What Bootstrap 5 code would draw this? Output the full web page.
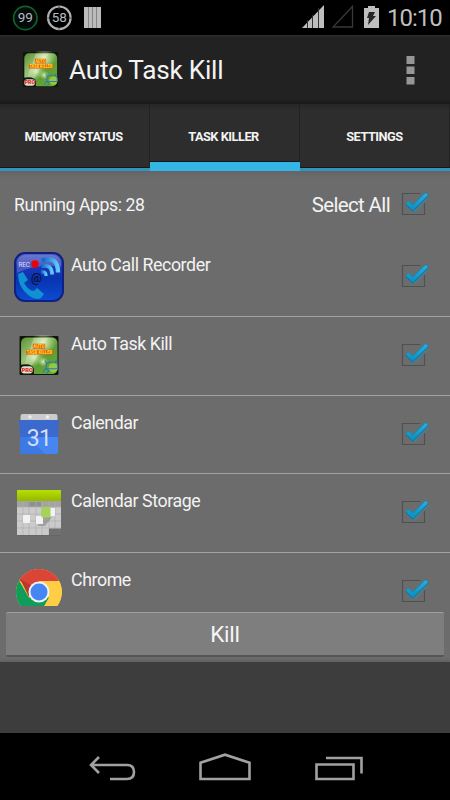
<!DOCTYPE html>
<html lang="en">
<head>
<meta charset="utf-8">
<meta name="viewport" content="width=device-width, initial-scale=1">
<title>Auto Task Kill</title>
<link href="https://cdn.jsdelivr.net/npm/bootstrap@5.3.0/dist/css/bootstrap.min.css" rel="stylesheet">
<style>
body{width:450px;height:800px;overflow:hidden;background:#3d3d3d;color:#f3f3f3;font-family:Roboto,"Liberation Sans",sans-serif;line-height:1}
svg{display:block;flex:none}
.status{height:35px;background:#000;padding:0 8px 0 12px}
.clock{font-size:24px;color:#bebebe;letter-spacing:-1px;width:55px;padding-top:1px}
.appbar{height:69px;background:linear-gradient(#2d2d2d 0,#2d2d2d 1px,#222 2px,#222 64px,#1c1c1c 67px,#181818);padding:0 35px 0 22px}
.apptitle{font-size:26.2px;margin-left:10px;letter-spacing:-.25px;padding-top:2px}
.tabs{height:67px;background:linear-gradient(#262626,#2d2d2d 6px)}
.tab{font-size:12.8px;font-weight:700;color:#f3f3f3;border:0;border-bottom:3px solid #3294bd;box-shadow:inset 0 -1px #171717,inset -1px 0 #222;padding:2px 3px 0 0;background:none;letter-spacing:-.5px}
.tab.active{border-bottom:9px solid #33b5e5;padding-top:8px}
.tab:last-child{padding-right:1px}
.panel{height:491px;background:linear-gradient(#646464,#6c6c6c 7px,#6c6c6c 487px,#626262)}
.summary{height:67px;padding:0 18px 0 14px;font-size:17.6px;letter-spacing:-.4px}
.summary span{padding-top:2px}
.select-all{font-size:20.5px;margin-right:10px;letter-spacing:-.65px}
.summary .check{margin-top:-1px}
.apps{height:368px;overflow:hidden}
.app{height:78.75px;border:0;border-bottom:1px solid #a2a2a2;background:none;color:#f3f3f3;padding:0 18px 0 14px;border-radius:0}
.app-icon{width:50px;margin:14px 7px 0 0}
.app-name{font-size:17.8px;padding-top:18px;letter-spacing:-.43px}
.app .check{margin-top:22px}
.kill{height:45px;margin:6px 6px 0;border:0;border-top:1px solid #a0a0a0;border-bottom:2px solid #555;border-radius:2px;background:#7e7e7e;color:#f5f5f5;font-size:22.5px;padding:2px 0 0;letter-spacing:-.2px}
.navkeys{height:67px;background:#000}
</style>
<script src="https://cdn.jsdelivr.net/npm/bootstrap@5.3.0/dist/js/bootstrap.bundle.min.js"></script>
</head>
<body class="d-flex flex-column">
<svg width="0" height="0" class="position-absolute" aria-hidden="true">
<defs>
<linearGradient id="leaf" x1="0" y1="0" x2="1" y2="1"><stop offset="0" stop-color="#5a9030"/><stop offset=".35" stop-color="#9cc27a"/><stop offset=".6" stop-color="#5d9c38"/><stop offset="1" stop-color="#6fae30"/></linearGradient>
<radialGradient id="glow"><stop offset="0" stop-color="#f4ffe0"/><stop offset="1" stop-color="#c8e890" stop-opacity="0"/></radialGradient>
<linearGradient id="blue" x1="0" y1="0" x2="0" y2="1"><stop offset="0" stop-color="#5560c0"/><stop offset=".3" stop-color="#1c35b8"/><stop offset=".55" stop-color="#0834b0"/><stop offset="1" stop-color="#0c4cd4"/></linearGradient>
<linearGradient id="wave" x1="0" y1="0" x2="1" y2="0"><stop offset="0" stop-color="#0a62c8"/><stop offset="1" stop-color="#5fcdf8"/></linearGradient>
<linearGradient id="lime" x1="0" y1="0" x2="0" y2="1"><stop offset="0" stop-color="#b9df00"/><stop offset="1" stop-color="#94b800"/></linearGradient>
<linearGradient id="tick" x1="0" y1="0" x2="0" y2="1"><stop offset="0" stop-color="#24aee0"/><stop offset="1" stop-color="#0b93c7"/></linearGradient>
<filter id="soft" x="-50%" y="-50%" width="200%" height="200%"><feGaussianBlur stdDeviation="1.6"/></filter>
<symbol id="i-task" viewBox="0 0 40 40">
<rect x="1" y="1" width="38" height="38" rx="1" fill="#11160c"/>
<rect x="2.500" y="2.500" width="35.500" height="35.500" rx="5" fill="url(#leaf)"/>
<path d="M15 3h14L13 30H5z" fill="#e4f2d4" opacity=".35"/>
<circle cx="24" cy="8" r="12" fill="url(#glow)" opacity=".75"/><circle cx="15" cy="22" r="9" fill="url(#glow)" opacity=".7"/><circle cx="24" cy="26" r="5" fill="url(#glow)" opacity=".8"/><circle cx="34" cy="32" r="4.500" fill="#a1cf47" opacity=".8"/>
<path d="M14 8.500h12v5H14zM7.500 14.500h26v4.500h-26z" fill="#e8590c"/>
<text x="14.500" y="12.900" font-size="5" font-weight="900" fill="#ffd01e" textLength="11" lengthAdjust="spacingAndGlyphs">AUTO</text>
<text x="8" y="18.500" font-size="5" font-weight="900" fill="#ffd01e" textLength="25" lengthAdjust="spacingAndGlyphs">TASK KILLER</text>
<path d="M24 37l2-4 4 2-3 3M27 33v-5q6-4 11 0v5zM28 28l-2-3M36 27l1-3" fill="none" stroke="#287ab4"/>
<path d="M2 29q11-2 13 4v6H2z" fill="#15150f"/><rect x="2.500" y="30.500" width="11.500" height="7" rx="3" fill="#d8dfc9"/>
<text x="3" y="36.200" font-size="5.600" font-weight="900" fill="#e3221e" textLength="11" lengthAdjust="spacingAndGlyphs">PRO</text>
</symbol>
<symbol id="i-check" viewBox="0 0 32 32">
<path d="M20.500 5.500H2.500v21h22V15" fill="none" stroke="#505050" stroke-width="1.200"/>
<path d="M8 15l6 6L27 7" fill="none" stroke="#219cc8" stroke-width="5" opacity=".5" filter="url(#soft)"/>
<path d="M7 14.700l5.700 5.600L27 6" fill="none" stroke="#167297" stroke-width="4.800"/>
<path d="M7.200 14.500l5.500 5.400L26.800 6" fill="none" stroke="url(#tick)" stroke-width="3.700"/>
</symbol>
</defs></svg>

<header class="status d-flex align-items-center justify-content-between">
<svg width="92" height="35" viewBox="12 0 92 35" font-family="Roboto" font-size="13.500" text-anchor="middle" fill="#b8bcc0">
<circle cx="25.300" cy="18" r="11.700" fill="#030a0c" stroke="#0d6429" stroke-width="1.700"/><text x="25.300" y="22.300">99</text>
<circle cx="59.300" cy="17.800" r="11.300" fill="none" stroke="#b1b1b1" stroke-width="2.200"/><text x="59.300" y="22.300">58</text>
<path d="M59 5v4M59 27v4M46.500 18h3M69 18h3" stroke="#444" stroke-width=".8"/>
<path d="M84 7h17v21H84z" fill="#bbb"/><path d="M88.500 7v21M92.500 7v21M96.500 7v21" stroke="#858585"/>
</svg>
<div class="d-flex align-items-center">
<svg width="87" height="35" viewBox="300 0 87 35">
<path d="M324 5v23h-22z" fill="#bebebe"/><path d="M307.500 20v8M312.500 15v13M318.500 8v20" stroke="#333"/>
<path d="M352.500 6.500v20.500h-19.500z" fill="none" stroke="#393939" stroke-width="1.300"/>
<path d="M364 8h4V6h7v2h4v20h-15z" fill="#bebebe"/><path d="M369 12h6l-2 4h3l-8 9 1-7h-2z" fill="#252525"/>
</svg>
<span class="clock text-nowrap">10:10</span>
</div>
</header>

<nav class="appbar d-flex align-items-center">
<svg width="37" height="37"><use href="#i-task"/></svg>
<h1 class="apptitle fw-normal mb-0 flex-grow-1">Auto Task Kill</h1>
<svg width="9" height="30" viewBox="0 0 9 30"><path d="M.5 1h8v8h-8zM.5 11.500h8v7.500h-8zM.5 22h8v7.500h-8z" fill="#969696"/></svg>
</nav>

<div class="tabs row g-0 flex-shrink-0">
<button class="tab col-4">MEMORY STATUS</button>
<button class="tab col-4 active">TASK KILLER</button>
<button class="tab col-4">SETTINGS</button>
</div>

<main class="panel flex-shrink-0">
<div class="summary d-flex align-items-center">
<span class="flex-grow-1">Running Apps: 28</span><span class="select-all">Select All</span>
<svg width="32" height="32" class="check"><use href="#i-check"/></svg>
</div>
<div class="apps list-group rounded-0">
<div class="app list-group-item d-flex flex-shrink-0">
<svg class="app-icon" height="50" viewBox="0 0 50 50"><rect x="1" y="1" width="48" height="48" rx="10" fill="url(#blue)" stroke="#102080" stroke-width="2"/><path d="M3 11q1-8 9-8h26q8 0 9 8v4Q25 11 3 21z" fill="#c4c8f0" opacity=".25"/>
<text x="4.500" y="14.500" font-size="6.500" fill="#dde" textLength="11.500">REC</text><circle cx="21" cy="12" r="3.700" fill="#f00000"/>
<path d="M28 8.500q16-5 16 12" fill="none" stroke="url(#wave)" stroke-width="4.400"/><path d="M27 14.500q11-3 11 8" fill="none" stroke="url(#wave)" stroke-width="3.800"/><path d="M27 20q5-1 5 4" fill="none" stroke="url(#wave)" stroke-width="3.400"/>
<path d="M4 22l5-2 5 8-4 3q5 8 10 8l3-3 7 6-3 4q-6 3-14-4Q4 34 4 22z" fill="#1191d1"/><text x="22.500" y="30" text-anchor="middle" font-size="12" font-weight="500" fill="#07102c">@</text></svg>
<span class="app-name flex-grow-1">Auto Call Recorder</span><svg width="32" height="32" class="check"><use href="#i-check"/></svg></div>
<div class="app list-group-item d-flex flex-shrink-0">
<svg class="app-icon" height="50" viewBox="0 0 50 50"><use href="#i-task" x="4.500" y="4" width="41" height="41"/></svg>
<span class="app-name flex-grow-1">Auto Task Kill</span><svg width="32" height="32" class="check"><use href="#i-check"/></svg></div>
<div class="app list-group-item d-flex flex-shrink-0">
<svg class="app-icon" height="50" viewBox="0 0 50 50"><path d="M6.500 12V6q0-2 2-2h33q2 0 2 2v6z" fill="#cbcbcb"/><circle cx="16" cy="7" r="1.700" fill="#eee"/><circle cx="33.500" cy="7" r="1.700" fill="#eee"/><path d="M5 10h40l-1 17H6z" fill="#3b69ce"/><path d="M6 27h38v15q0 2-2 2H8q-2 0-2-2z" fill="#4586f3"/><path d="M6 27h8l17 17H8q-2 0-2-2z" fill="#3d79e2"/>
<text x="25" y="35.500" text-anchor="middle" font-size="23" fill="#d3dffa" letter-spacing="-.8">31</text></svg>
<span class="app-name flex-grow-1">Calendar</span><svg width="32" height="32" class="check"><use href="#i-check"/></svg></div>
<div class="app list-group-item d-flex flex-shrink-0">
<svg class="app-icon" height="50" viewBox="0 0 50 50"><path d="M3 2h44v46H3z" fill="#cbcbcb"/><path d="M3 13h44v6H3z" fill="#a3a3a3"/><path d="M14 14h13v5H14z" fill="#858585" opacity=".65"/><path d="M3 2h44v11H3z" fill="url(#lime)"/><path d="M9 13v34M15 13v34M22 13v34M28 13v34M35 13v34M41 13v34M3 19h44M3 26h44M3 33h44M3 40h44" stroke="#b0b0b0" stroke-width=".7"/><path d="M23 29h15l-7 9h-7z" fill="#777" opacity=".5"/><path d="M9 27h7v8H9zM22 28h7v8h-7zM36 20h5v8h-5z" fill="#f2f2f2"/><path d="M27.500 19h9v10.500h-9z" fill="#a8d158"/><path d="M35 40.500h12V47H35z" fill="#707070"/><path d="M3 47.500h44" stroke="#666"/></svg>
<span class="app-name flex-grow-1">Calendar Storage</span><svg width="32" height="32" class="check"><use href="#i-check"/></svg></div>
<div class="app list-group-item d-flex flex-shrink-0">
<svg class="app-icon" height="50" viewBox="0 0 50 50"><circle cx="25" cy="25" r="23" fill="#ffce44"/><path d="M25 25L5.100 13.500a23 23 0 0 1 39.800 0z" fill="#db4537"/><path d="M5.100 13.500A23 23 0 0 0 25 48l10-17.300L25 25l-10 5.800z" fill="#109d59"/><path d="M25 14h20a23 23 0 0 1-20 34l10-17z" fill="#ffce44"/><path d="M6 12l9 18 2-12z" fill="#b93831"/><circle cx="25" cy="25" r="10.500" fill="#f1f1f1"/><circle cx="25" cy="25" r="8.500" fill="#4586f3"/></svg>
<span class="app-name flex-grow-1">Chrome</span><svg width="32" height="32" class="check"><use href="#i-check"/></svg></div>
</div>
<div class="d-grid"><button class="kill btn">Kill</button></div>
</main>
<div class="flex-grow-1"></div>
<footer class="navkeys flex-shrink-0">
<svg width="450" height="67" viewBox="0 733 450 67" fill="none" stroke="#a1a1a1" stroke-width="2.600">
<path d="M99 757l-8 8 8 8M91 765h36q7 0 7 7t-7 7h-17"/><path d="M200.500 779v-16.300l24.500-8 24.500 8V779z"/><path d="M316.500 764.500h37V779h-37zM326 758h35.500v15.500"/>
</svg>
</footer>
</body>
</html>
